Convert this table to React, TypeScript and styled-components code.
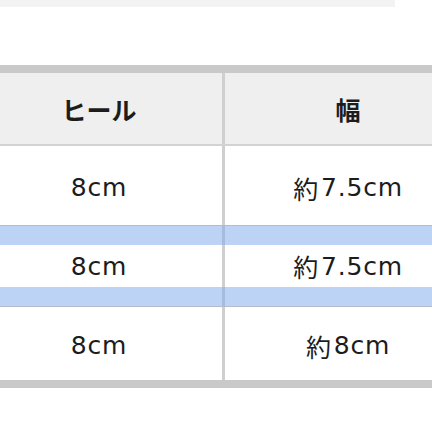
import { Fragment } from "react"
import styled, { createGlobalStyle } from "styled-components"

const GlobalStyle = createGlobalStyle`
  html, body {
    margin: 0;
    padding: 0;
    background: #ffffff;
  }
  body {
    font-family: "DejaVu Sans", "Noto Sans CJK JP", sans-serif;
    color: #1c1c1c;
  }
`

const Page = styled.div`
  width: 432px;
  height: 432px;
  overflow: hidden;
  background: #fff;
`

const TopStrip = styled.div`
  width: 395px;
  height: 7px;
  background: #f3f3f3;
  margin-bottom: 58px;
`

const Table = styled.div`
  display: grid;
  grid-template-columns: 249px 246px;
  margin-left: -24px;
  border-top: 8px solid #c9c9c9;
  border-bottom: 8px solid #c9c9c9;
`

const Cell = styled.div<{
  $h: number
  $left?: boolean
  $head?: boolean
  $band?: boolean
  $line?: "top" | "bottom"
}>`
  display: flex;
  align-items: center;
  justify-content: center;
  box-sizing: border-box;
  height: ${({ $h }) => $h}px;
  padding-top: ${({ $h, $head }) => (!$head && $h > 50 ? "4px" : "0")};
  background: ${({ $head, $band }) => ($head ? "#efefef" : $band ? "#bdd3f6" : "#ffffff")};
  font-family: ${({ $head }) => ($head ? `"Noto Sans CJK JP", sans-serif` : "inherit")};
  font-size: ${({ $head }) => ($head ? "25px" : "25px")};
  font-weight: ${({ $head }) => ($head ? 700 : 400)};
  letter-spacing: ${({ $head }) => ($head ? "0" : "0.8px")};
  border-top: ${({ $line }) => ($line === "top" ? "1px solid #b3bccb" : "none")};
  border-bottom: ${({ $line }) => ($line === "bottom" ? "1px solid #b3bccb" : "none")};
  border-right: ${({ $left, $band }) =>
    $left ? `3px solid ${$band ? "#a7bbdd" : "#cfcfcf"}` : "none"};
`

const HeadRule = styled.div`
  grid-column: 1 / -1;
  height: 2px;
  background: #d2d2d2;
`

const Kanji = styled.span`
  font-family: "Noto Sans CJK JP", sans-serif;
  margin-right: 2px;
`

type Row = { h: number; band?: boolean; line?: "top" | "bottom"; cells: [string, string] }

const rows: Row[] = [
  { h: 79, cells: ["8cm", "7.5cm"] },
  { h: 20, band: true, line: "top", cells: ["", ""] },
  { h: 42, cells: ["8cm", "7.5cm"] },
  { h: 20, band: true, line: "bottom", cells: ["", ""] },
  { h: 73, cells: ["8cm", "8cm"] },
]

export default function App() {
  return (
    <Page>
      <GlobalStyle />
      <TopStrip />
      <Table>
        <Cell $h={71} $head $left>
          ヒール
        </Cell>
        <Cell $h={71} $head>
          幅
        </Cell>
        <HeadRule />
        {rows.map((r, i) => (
          <Fragment key={i}>
            <Cell $h={r.h} $band={r.band} $line={r.line} $left>
              {r.cells[0]}
            </Cell>
            <Cell $h={r.h} $band={r.band} $line={r.line}>
              {r.cells[1] && <Kanji>約</Kanji>}
              {r.cells[1]}
            </Cell>
          </Fragment>
        ))}
      </Table>
    </Page>
  )
}
